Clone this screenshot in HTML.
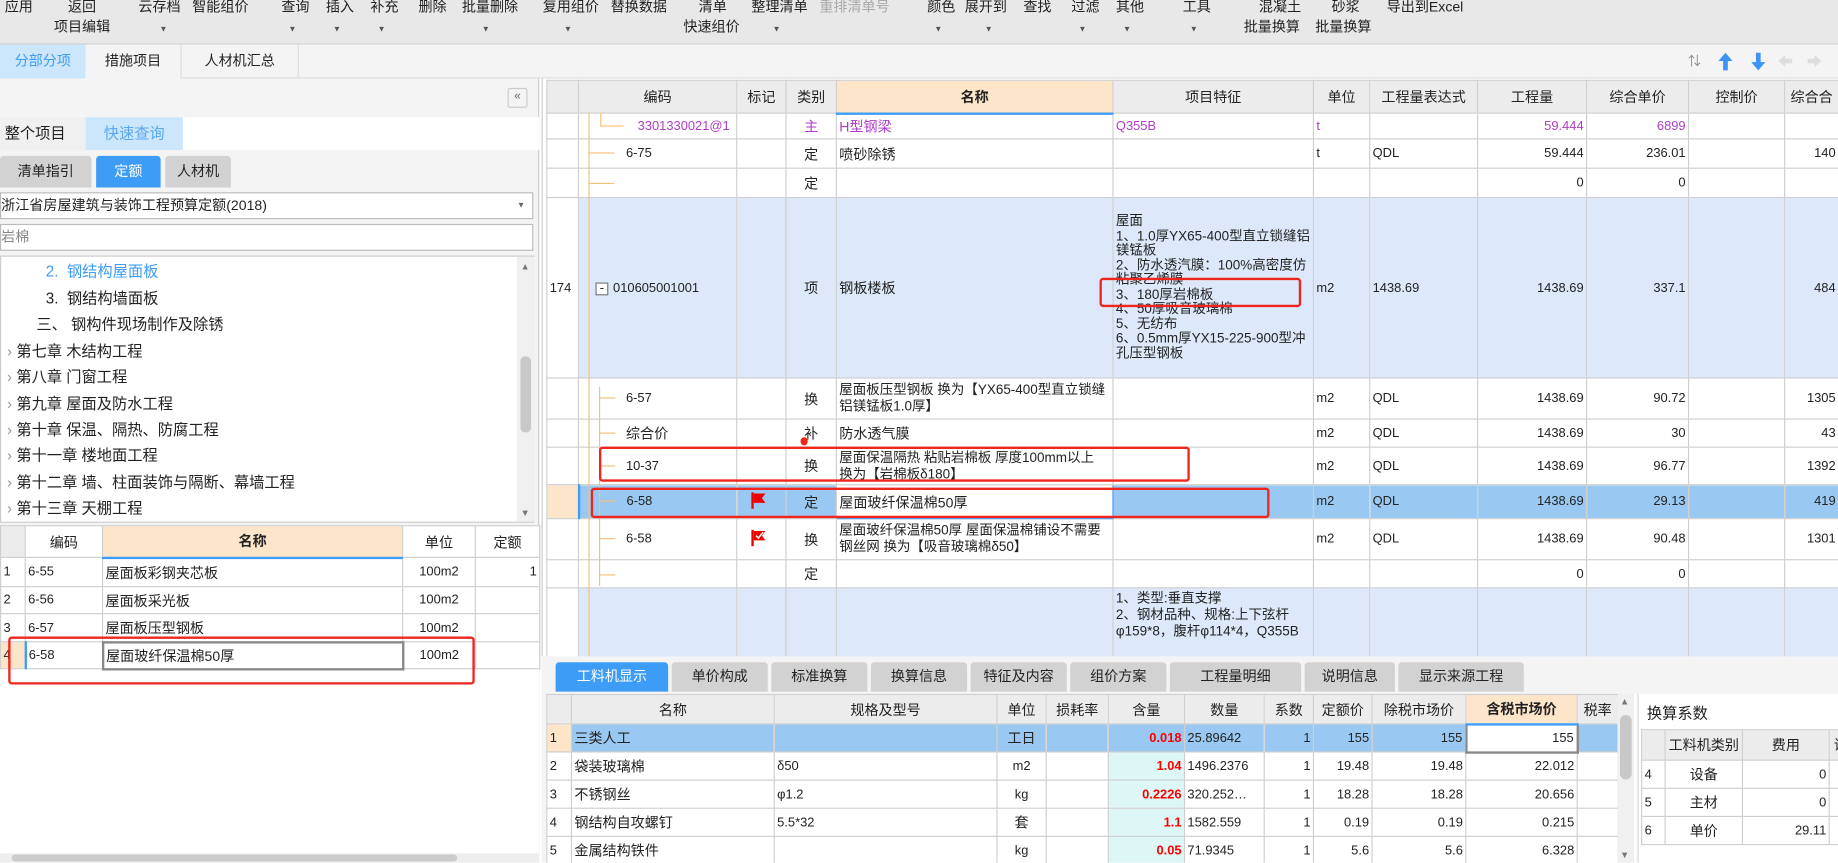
<!DOCTYPE html>
<html><head><meta charset="utf-8"><style>
*{box-sizing:border-box;margin:0;padding:0}
html,body{width:1838px;height:863px;overflow:hidden;background:#fff}
#w{position:absolute;left:0;top:0;width:1568px;height:736px;transform:scale(1.17219);transform-origin:0 0;font-family:"Liberation Sans","Noto Sans CJK SC",sans-serif;font-size:12px;color:#222;overflow:hidden}
.a{position:absolute}
.tb{background:#e8e8e8;height:38px;left:0;top:0;width:1568px;border-bottom:1px solid #d0d0d0}
.tb span{position:absolute;font-size:12px;white-space:nowrap}
.tb i{position:absolute;font-style:normal;font-size:7px;color:#555}
table{border-collapse:collapse;table-layout:fixed;position:absolute}
td{border:1px solid #cfcfcf;overflow:hidden;white-space:nowrap;padding:0 2px;vertical-align:middle;font-size:11px}
.h td{background:#ececec;text-align:center;font-size:12px}
.r{text-align:right}.c{text-align:center}
.tab{position:absolute;background:#d2d2d2;text-align:center;font-size:12px;border-radius:3px 3px 0 0}
.red{position:absolute;border:2px solid #f0261e;border-radius:3px}
.ln{position:absolute;background:#f7c07a}
</style></head><body><div id="w">
<div class="a tb">
<span style="left:4px;top:-3px">应用</span><span style="left:58px;top:-3px">返回</span><span style="left:46px;top:14px">项目编辑</span>
<span style="left:118px;top:-3px">云存档</span><i style="left:136px;top:22px">▼</i>
<span style="left:164px;top:-3px">智能组价</span>
<span style="left:240px;top:-3px">查询</span><i style="left:246px;top:22px">▼</i>
<span style="left:278px;top:-3px">插入</span><i style="left:284px;top:22px">▼</i>
<span style="left:316px;top:-3px">补充</span><i style="left:322px;top:22px">▼</i>
<span style="left:357px;top:-3px">删除</span>
<span style="left:394px;top:-3px">批量删除</span><i style="left:411px;top:22px">▼</i>
<span style="left:463px;top:-3px">复用组价</span><i style="left:481px;top:22px">▼</i>
<span style="left:521px;top:-3px">替换数据</span>
<span style="left:596px;top:-3px">清单</span><span style="left:583px;top:14px">快速组价</span>
<span style="left:641px;top:-3px">整理清单</span><i style="left:659px;top:22px">▼</i>
<span style="left:699px;top:-3px;color:#aaa">重排清单号</span>
<span style="left:791px;top:-3px">颜色</span><i style="left:797px;top:22px">▼</i>
<span style="left:823px;top:-3px">展开到</span><i style="left:840px;top:22px">▼</i>
<span style="left:873px;top:-3px">查找</span>
<span style="left:914px;top:-3px">过滤</span><i style="left:920px;top:22px">▼</i>
<span style="left:952px;top:-3px">其他</span><i style="left:958px;top:22px">▼</i>
<span style="left:1009px;top:-3px">工具</span><i style="left:1015px;top:22px">▼</i>
<span style="left:1074px;top:-3px">混凝土</span><span style="left:1061px;top:14px">批量换算</span>
<span style="left:1136px;top:-3px">砂浆</span><span style="left:1122px;top:14px">批量换算</span>
<span style="left:1183px;top:-3px">导出到Excel</span>
</div>
<div class="a" style="left:0;top:38px;width:1568px;height:29px;background:#f4f4f4;border-bottom:1px solid #ddd"></div>
<div class="a" style="left:0;top:38px;width:73px;height:29px;background:#cce6fb;color:#3d9cf5;font-size:12px;line-height:29px;text-align:center">分部分项</div>
<div class="a" style="left:73px;top:38px;width:82px;height:29px;background:#f4f4f4;border-right:1px solid #ddd;line-height:29px;text-align:center">措施项目</div>
<div class="a" style="left:155px;top:38px;width:100px;height:29px;border-right:1px solid #ddd;line-height:29px;text-align:center">人材机汇总</div>
<div class="a" style="left:1440px;top:44px;color:#888;font-size:11px">⇅</div>
<svg class="a" style="left:1462px;top:43px" width="100" height="18"><path d="M10 2 L4 9 H8 V17 H12 V9 H16Z" fill="#3d94f5"/><path d="M38 17 L32 10 H36 V2 H40 V10 H44Z" fill="#3d94f5"/><path d="M55 9 L61 4 V7 H67 V11 H61 V14Z" fill="#ddd"/><path d="M92 9 L86 4 V7 H80 V11 H86 V14Z" fill="#ddd"/></svg>
<!-- left panel -->
<div class="a" style="left:0;top:67px;width:460px;height:669px;background:#f4f4f4;border-right:1px solid #ccc"></div>
<div class="a" style="left:433px;top:75px;width:17px;height:17px;border:1px solid #ccc;border-radius:2px;font-size:10px;text-align:center;line-height:14px;color:#666">«</div>
<div class="a" style="left:0;top:100px;width:460px;height:28px;background:#fff"></div>
<div class="a" style="left:0;top:100px;width:73px;height:28px;background:#f0f0f0;line-height:28px;padding-left:4px;font-size:13px">整个项目</div>
<div class="a" style="left:73px;top:100px;width:83px;height:28px;background:#cce6fb;color:#5aa8f0;line-height:28px;text-align:center;font-size:13px">快速查询</div>
<div class="tab" style="left:0;top:133px;width:78px;height:27px;line-height:27px">清单指引</div>
<div class="tab" style="left:82px;top:133px;width:55px;height:27px;line-height:27px;background:#3d9cf5;color:#fff">定额</div>
<div class="tab" style="left:141px;top:133px;width:56px;height:27px;line-height:27px">人材机</div>
<div class="a" style="left:0;top:164px;width:455px;height:23px;background:#fff;border:1px solid #bbb;line-height:21px;font-size:12px">浙江省房屋建筑与装饰工程预算定额(2018)<span style="position:absolute;right:6px;font-size:7px;color:#666">▼</span></div>
<div class="a" style="left:0;top:191px;width:455px;height:23px;background:#fff;border:1px solid #bbb;line-height:21px;color:#888">岩棉</div>
<div class="a" style="left:0;top:218px;width:456px;height:228px;background:#fff;border:1px solid #ccc;font-size:13px">
<div class="a" style="left:440px;top:0;width:15px;height:226px;background:#f0f0f0"></div>
<div class="a" style="left:443px;top:85px;width:9px;height:65px;background:#c8c8c8;border-radius:4px"></div>
<div class="a" style="left:443px;top:4px;font-size:8px;color:#777">▲</div><div class="a" style="left:443px;top:214px;font-size:8px;color:#777">▼</div>
<div class="a" style="left:38px;top:2px;color:#3d9cf5">2.&nbsp; 钢结构屋面板</div>
<div class="a" style="left:38px;top:25px">3.&nbsp; 钢结构墙面板</div>
<div class="a" style="left:30px;top:47px">三、 钢构件现场制作及除锈</div>
<div class="a" style="left:5px;top:70px"><span style="color:#999">›</span> 第七章 木结构工程</div>
<div class="a" style="left:5px;top:92px"><span style="color:#999">›</span> 第八章 门窗工程</div>
<div class="a" style="left:5px;top:115px"><span style="color:#999">›</span> 第九章 屋面及防水工程</div>
<div class="a" style="left:5px;top:137px"><span style="color:#999">›</span> 第十章 保温、隔热、防腐工程</div>
<div class="a" style="left:5px;top:159px"><span style="color:#999">›</span> 第十一章 楼地面工程</div>
<div class="a" style="left:5px;top:182px"><span style="color:#999">›</span> 第十二章 墙、柱面装饰与隔断、幕墙工程</div>
<div class="a" style="left:5px;top:204px"><span style="color:#999">›</span> 第十三章 天棚工程</div>
</div>
<div class="a" style="left:0;top:448px;width:460px;height:288px;background:#fff"></div>
<table style="left:0;top:448px;width:460px">
<colgroup><col style="width:21px"><col style="width:66px"><col style="width:256px"><col style="width:62px"><col style="width:55px"></colgroup>
<tr class="h" style="height:27px"><td></td><td style="background:#fff">编码</td><td style="background:#fde5c9;font-weight:bold;border-bottom:2px solid #3d9cf5">名称</td><td style="background:#fff">单位</td><td style="background:#fff">定额</td></tr>
<tr style="height:25px"><td>1</td><td>6-55</td><td style="font-size:12px">屋面板彩钢夹芯板</td><td class="c">100m2</td><td class="r">1</td></tr>
<tr style="height:23px"><td>2</td><td>6-56</td><td style="font-size:12px">屋面板采光板</td><td class="c">100m2</td><td></td></tr>
<tr style="height:24px"><td>3</td><td>6-57</td><td style="font-size:12px">屋面板压型钢板</td><td class="c">100m2</td><td></td></tr>
<tr style="height:23px"><td style="background:#fde5c9">4</td><td style="border-left:2px solid #3d9cf5">6-58</td><td style="font-size:12px;border:2px solid #888">屋面玻纤保温棉50厚</td><td class="c">100m2</td><td></td></tr>
</table>
<div class="red" style="left:7px;top:543px;width:398px;height:41px"></div>
<div class="a" style="left:0;top:728px;width:460px;height:8px;background:#eee"></div>
<div class="a" style="left:10px;top:729px;width:380px;height:6px;background:#ccc;border-radius:3px"></div>
<!-- right top grid -->
<div class="a" style="left:462px;top:67px;width:1106px;height:496px;background:#fff;border-left:1px solid #ccc"></div>
<table style="left:466px;top:68px;width:1102px">
<colgroup><col style="width:27px"><col style="width:135px"><col style="width:42px"><col style="width:43px"><col style="width:236px"><col style="width:171px"><col style="width:48px"><col style="width:92px"><col style="width:93px"><col style="width:87px"><col style="width:82px"><col style="width:46px"></colgroup>
<tr class="h" style="height:28px"><td></td><td>编码</td><td>标记</td><td>类别</td><td style="background:#fde5c9;font-weight:bold;border-bottom:2px solid #3d9cf5">名称</td><td>项目特征</td><td>单位</td><td>工程量表达式</td><td>工程量</td><td>综合单价</td><td>控制价</td><td>综合合</td></tr>
<tr style="height:22px;color:#b03cc8"><td></td><td style="padding-left:50px">3301330021@1</td><td></td><td class="c" style="font-size:12px">主</td><td style="font-size:12px">H型钢梁</td><td>Q355B</td><td>t</td><td></td><td class="r">59.444</td><td class="r">6899</td><td></td><td></td></tr>
<tr style="height:25px"><td></td><td style="padding-left:40px">6-75</td><td></td><td class="c" style="font-size:12px">定</td><td style="font-size:12px">喷砂除锈</td><td></td><td>t</td><td>QDL</td><td class="r">59.444</td><td class="r">236.01</td><td></td><td class="r">140</td></tr>
<tr style="height:25px"><td></td><td></td><td></td><td class="c" style="font-size:12px">定</td><td></td><td></td><td></td><td></td><td class="r">0</td><td class="r">0</td><td></td><td></td></tr>
<tr style="height:154px;background:#dde9fb"><td style="background:#fff">174</td><td style="padding-left:14px"><span style="display:inline-block;width:11px;height:11px;border:1px solid #777;line-height:8px;text-align:center;background:#fff;margin-right:4px">-</span>010605001001</td><td></td><td class="c" style="font-size:12px">项</td><td style="font-size:12px">钢板楼板</td><td style="white-space:normal;line-height:12.5px;font-size:11.5px">屋面<br>1、1.0厚YX65-400型直立锁缝铝镁锰板<br>2、防水透汽膜：100%高密度仿粘聚乙烯膜<br>3、180厚岩棉板<br>4、50厚吸音玻璃棉<br>5、无纺布<br>6、0.5mm厚YX15-225-900型冲孔压型钢板</td><td>m2</td><td>1438.69</td><td class="r">1438.69</td><td class="r">337.1</td><td></td><td class="r">484</td></tr>
<tr style="height:35px"><td></td><td style="padding-left:40px">6-57</td><td></td><td class="c" style="font-size:12px">换</td><td style="white-space:normal;line-height:14px;font-size:11.5px">屋面板压型钢板 换为【YX65-400型直立锁缝铝镁锰板1.0厚】</td><td></td><td>m2</td><td>QDL</td><td class="r">1438.69</td><td class="r">90.72</td><td></td><td class="r">1305</td></tr>
<tr style="height:24px"><td></td><td style="padding-left:40px;font-size:12px">综合价</td><td></td><td class="c" style="font-size:12px">补</td><td style="font-size:12px">防水透气膜</td><td></td><td>m2</td><td>QDL</td><td class="r">1438.69</td><td class="r">30</td><td></td><td class="r">43</td></tr>
<tr style="height:32px"><td></td><td style="padding-left:40px">10-37</td><td></td><td class="c" style="font-size:12px">换</td><td style="white-space:normal;line-height:14px;font-size:11.5px">屋面保温隔热 粘贴岩棉板 厚度100mm以上 换为【岩棉板δ180】</td><td></td><td>m2</td><td>QDL</td><td class="r">1438.69</td><td class="r">96.77</td><td></td><td class="r">1392</td></tr>
<tr style="height:29px;background:#99c9f2"><td style="background:#fde5c9;border-right:2px solid #3d9cf5"></td><td style="padding-left:40px">6-58</td><td><svg width="16" height="16" style="margin-left:8px"><path d="M3 1V15" stroke="#e00" stroke-width="2"/><path d="M4 2H14L11 6L14 10H4Z" fill="#e00"/></svg></td><td class="c" style="font-size:12px">定</td><td style="font-size:12px;background:#fff;border:1px solid #3d9cf5">屋面玻纤保温棉50厚</td><td></td><td>m2</td><td>QDL</td><td class="r">1438.69</td><td class="r">29.13</td><td></td><td class="r">419</td></tr>
<tr style="height:35px"><td></td><td style="padding-left:40px">6-58</td><td><svg width="16" height="16" style="margin-left:8px"><path d="M3 1V15" stroke="#e00" stroke-width="2"/><path d="M4 2H14L11 6L14 10H4Z" fill="#e00"/><path d="M6 6L8 8L12 3" stroke="#fff" fill="none" stroke-width="1.3"/></svg></td><td class="c" style="font-size:12px">换</td><td style="white-space:normal;line-height:14px;font-size:11.5px">屋面玻纤保温棉50厚 屋面保温棉铺设不需要钢丝网 换为【吸音玻璃棉δ50】</td><td></td><td>m2</td><td>QDL</td><td class="r">1438.69</td><td class="r">90.48</td><td></td><td class="r">1301</td></tr>
<tr style="height:24px"><td></td><td></td><td></td><td class="c" style="font-size:12px">定</td><td></td><td></td><td></td><td></td><td class="r">0</td><td class="r">0</td><td></td><td></td></tr>
<tr style="height:62px;background:#dde9fb"><td style="background:#fff"></td><td></td><td></td><td></td><td></td><td style="white-space:normal;line-height:14px;font-size:11.5px;vertical-align:top;padding-top:2px">1、类型:垂直支撑<br>2、钢材品种、规格:上下弦杆φ159*8，腹杆φ114*4，Q355B</td><td></td><td></td><td></td><td></td><td></td><td></td></tr>
</table>
<div class="a" style="left:462px;top:560px;width:1106px;height:5px;background:#f4f4f4"></div>
<!-- tree lines -->
<div class="ln" style="left:502px;top:96px;width:1px;height:464px"></div>
<div class="ln" style="left:512px;top:96px;width:1px;height:12px"></div>
<div class="ln" style="left:512px;top:107px;width:20px;height:1px"></div>
<div class="ln" style="left:502px;top:130px;width:22px;height:1px"></div>
<div class="ln" style="left:502px;top:156px;width:22px;height:1px"></div>
<div class="ln" style="left:511px;top:330px;width:1px;height:170px"></div>
<div class="ln" style="left:511px;top:339px;width:14px;height:1px"></div>
<div class="ln" style="left:511px;top:369px;width:14px;height:1px"></div>
<div class="ln" style="left:511px;top:397px;width:14px;height:1px"></div>
<div class="ln" style="left:511px;top:427px;width:14px;height:1px"></div>
<div class="ln" style="left:511px;top:459px;width:14px;height:1px"></div>
<div class="ln" style="left:511px;top:490px;width:14px;height:1px"></div>
<div class="red" style="left:938px;top:237px;width:172px;height:25px"></div>
<div class="red" style="left:511px;top:381px;width:504px;height:30px"></div>
<div class="red" style="left:504px;top:416px;width:579px;height:26px"></div>
<div class="a" style="left:683px;top:373px;width:6px;height:7px;background:#f0261e;border-radius:3px"></div>
<!-- bottom tabs -->
<div class="a" style="left:462px;top:563px;width:1106px;height:173px;background:#f4f4f4"></div>
<div class="tab" style="left:474px;top:565px;width:96px;height:25px;line-height:25px;background:#3d9cf5;color:#fff">工料机显示</div>
<div class="tab" style="left:573px;top:565px;width:82px;height:25px;line-height:25px">单价构成</div>
<div class="tab" style="left:658px;top:565px;width:82px;height:25px;line-height:25px">标准换算</div>
<div class="tab" style="left:743px;top:565px;width:82px;height:25px;line-height:25px">换算信息</div>
<div class="tab" style="left:828px;top:565px;width:82px;height:25px;line-height:25px">特征及内容</div>
<div class="tab" style="left:913px;top:565px;width:82px;height:25px;line-height:25px">组价方案</div>
<div class="tab" style="left:998px;top:565px;width:112px;height:25px;line-height:25px">工程量明细</div>
<div class="tab" style="left:1113px;top:565px;width:77px;height:25px;line-height:25px">说明信息</div>
<div class="tab" style="left:1193px;top:565px;width:107px;height:25px;line-height:25px">显示来源工程</div>
<div class="a" style="left:466px;top:592px;width:930px;height:144px;background:#fff"></div>
<table style="left:466px;top:592px;width:914px">
<colgroup><col style="width:21px"><col style="width:173px"><col style="width:190px"><col style="width:42px"><col style="width:53px"><col style="width:65px"><col style="width:68px"><col style="width:42px"><col style="width:50px"><col style="width:80px"><col style="width:95px"><col style="width:35px"></colgroup>
<tr class="h" style="height:25px"><td></td><td>名称</td><td>规格及型号</td><td>单位</td><td>损耗率</td><td>含量</td><td>数量</td><td>系数</td><td>定额价</td><td>除税市场价</td><td style="background:#fde5c9;font-weight:bold;border-bottom:2px solid #3d9cf5">含税市场价</td><td>税率</td></tr>
<tr style="height:24px;background:#99c9f2"><td style="background:#fde5c9">1</td><td style="font-size:12px">三类人工</td><td></td><td class="c" style="font-size:12px">工日</td><td></td><td class="r" style="color:#f00;font-weight:bold">0.018</td><td>25.89642</td><td class="r">1</td><td class="r">155</td><td class="r">155</td><td class="r" style="background:#fff;border:2px solid #888">155</td><td></td></tr>
<tr style="height:24px"><td>2</td><td style="font-size:12px">袋装玻璃棉</td><td>δ50</td><td class="c">m2</td><td></td><td class="r" style="color:#f00;font-weight:bold;background:#ddf7f7">1.04</td><td>1496.2376</td><td class="r">1</td><td class="r">19.48</td><td class="r">19.48</td><td class="r">22.012</td><td></td></tr>
<tr style="height:24px"><td>3</td><td style="font-size:12px">不锈钢丝</td><td>φ1.2</td><td class="c">kg</td><td></td><td class="r" style="color:#f00;font-weight:bold;background:#ddf7f7">0.2226</td><td>320.252…</td><td class="r">1</td><td class="r">18.28</td><td class="r">18.28</td><td class="r">20.656</td><td></td></tr>
<tr style="height:24px"><td>4</td><td style="font-size:12px">钢结构自攻螺钉</td><td>5.5*32</td><td class="c" style="font-size:12px">套</td><td></td><td class="r" style="color:#f00;font-weight:bold;background:#ddf7f7">1.1</td><td>1582.559</td><td class="r">1</td><td class="r">0.19</td><td class="r">0.19</td><td class="r">0.215</td><td></td></tr>
<tr style="height:24px"><td>5</td><td style="font-size:12px">金属结构铁件</td><td></td><td class="c">kg</td><td></td><td class="r" style="color:#f00;font-weight:bold;background:#ddf7f7">0.05</td><td>71.9345</td><td class="r">1</td><td class="r">5.6</td><td class="r">5.6</td><td class="r">6.328</td><td></td></tr>
</table>
<div class="a" style="left:1380px;top:592px;width:14px;height:144px;background:#f0f0f0"></div>
<div class="a" style="left:1382px;top:610px;width:10px;height:55px;background:#c8c8c8;border-radius:5px"></div>
<div class="a" style="left:1382px;top:594px;font-size:8px;color:#777">▲</div><div class="a" style="left:1382px;top:725px;font-size:8px;color:#777">▼</div>
<div class="a" style="left:1397px;top:592px;width:171px;height:144px;background:#fff;border-left:1px solid #ddd"></div>
<div class="a" style="left:1405px;top:598px;font-size:13px">换算系数</div>
<table style="left:1400px;top:622px;width:180px">
<colgroup><col style="width:20px"><col style="width:66px"><col style="width:74px"><col style="width:20px"></colgroup>
<tr class="h" style="height:26px"><td></td><td>工料机类别</td><td>费用</td><td>调</td></tr>
<tr style="height:24px"><td>4</td><td class="c" style="font-size:12px">设备</td><td class="r">0</td><td></td></tr>
<tr style="height:24px"><td>5</td><td class="c" style="font-size:12px">主材</td><td class="r">0</td><td></td></tr>
<tr style="height:24px"><td>6</td><td class="c" style="font-size:12px">单价</td><td class="r">29.11</td><td></td></tr>
</table>
</div></body></html>
